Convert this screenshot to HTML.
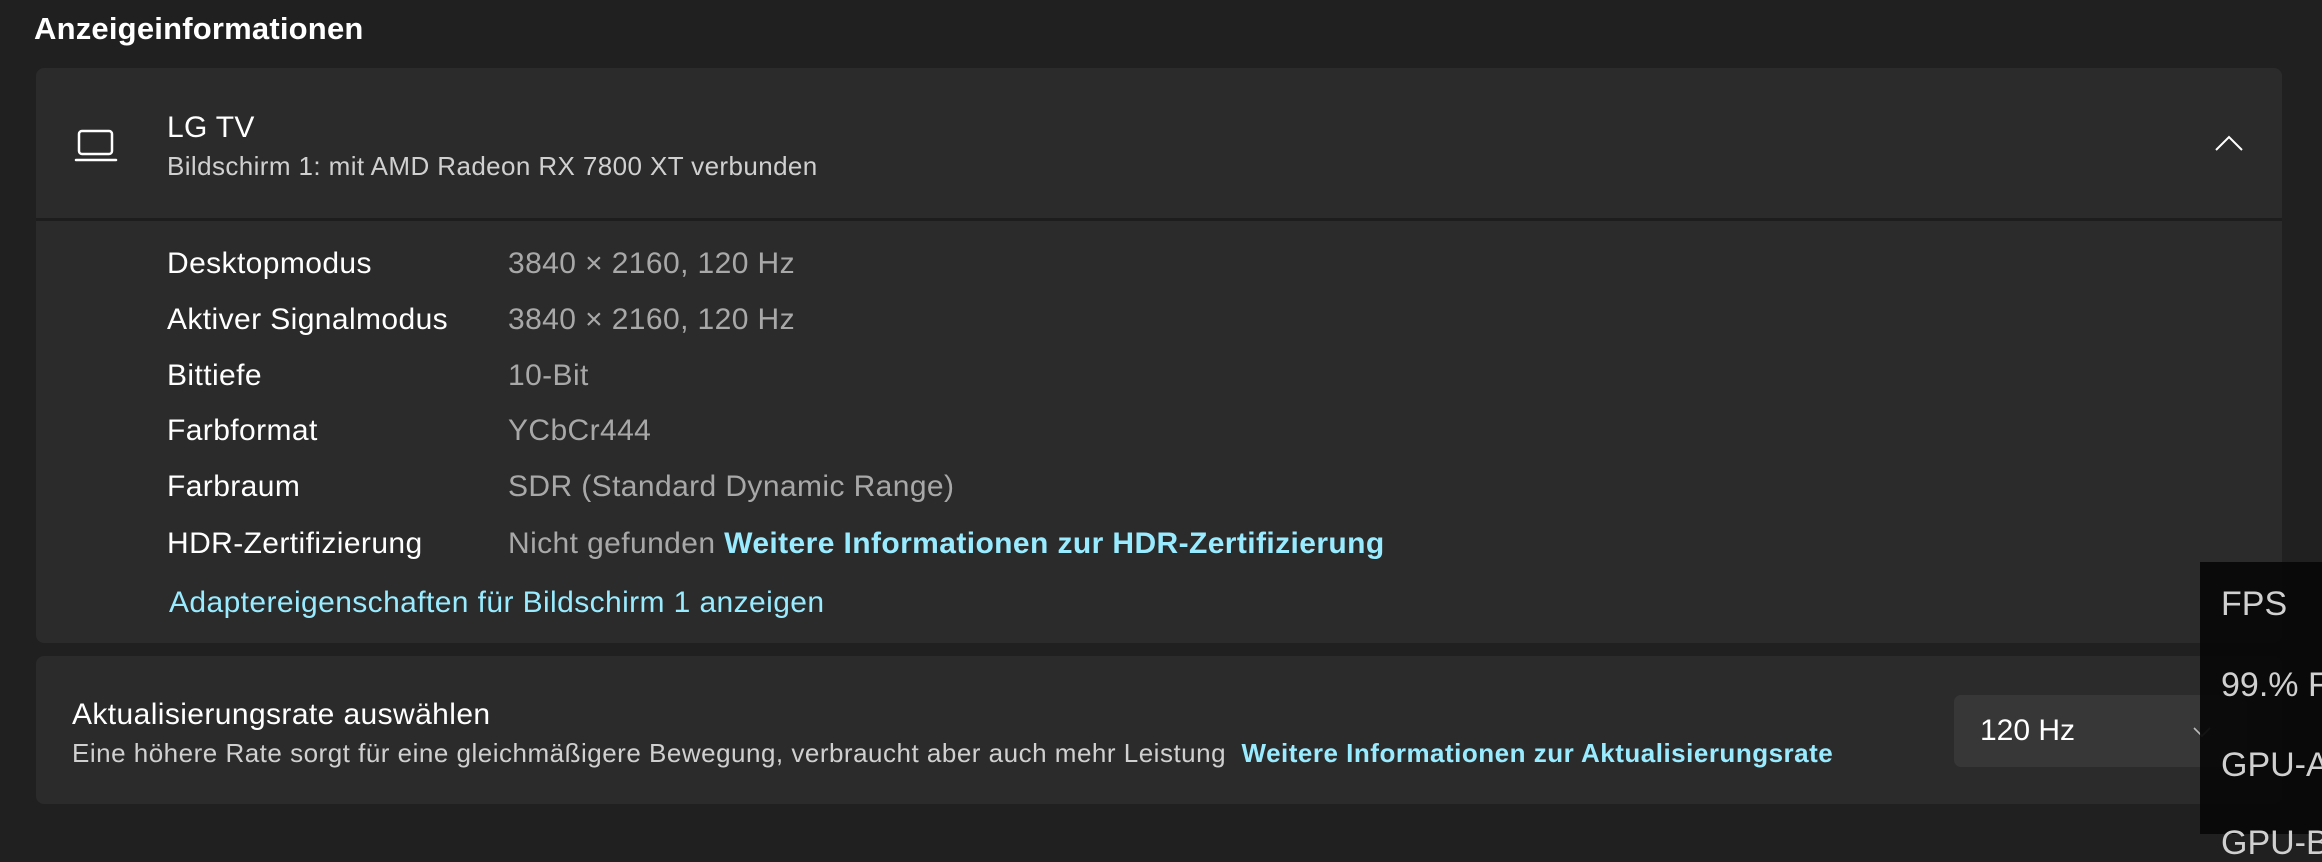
<!DOCTYPE html>
<html><head><meta charset="utf-8"><style>
*{margin:0;padding:0;box-sizing:border-box}
html,body{width:2322px;height:834px}
body{background:#202020;font-family:"Liberation Sans",sans-serif;color:#fff;position:relative;overflow:hidden}
.a{position:absolute;white-space:nowrap;line-height:1}
.card{position:absolute;background:#2b2b2b;border-radius:8px}
.lab{font-size:30px;color:#fff;left:167px;letter-spacing:0.4px}
.val{font-size:30px;color:#a8a8a8;left:508px;letter-spacing:0.4px}
.link{color:#99ebff}
.ov{font-size:34px;color:#d0d0d0;left:2221px}
</style></head><body>
<div class="a" style="left:34px;top:13px;font-size:31px;font-weight:bold;letter-spacing:0.2px">Anzeigeinformationen</div>

<div class="card" style="left:36px;top:68px;width:2246px;height:575px"></div>
<div class="a" style="left:36px;top:218px;width:2246px;height:3px;background:#1d1d1d"></div>

<svg class="a" style="left:74px;top:128px" width="44" height="36" viewBox="0 0 44 36"><rect x="5" y="3" width="33" height="23" rx="3" fill="none" stroke="#fff" stroke-width="2.5"/><line x1="2" y1="32" x2="42" y2="32" stroke="#fff" stroke-width="2.5" stroke-linecap="round"/></svg>
<div class="a" style="left:167px;top:113px;font-size:30px;letter-spacing:0.3px">LG TV</div>
<div class="a" style="left:167px;top:153px;font-size:26px;color:#d0d0d0;letter-spacing:0.4px">Bildschirm 1: mit AMD Radeon RX 7800 XT verbunden</div>
<svg class="a" style="left:2214px;top:134px" width="30" height="18" viewBox="0 0 30 18"><polyline points="2,16 15,3 28,16" fill="none" stroke="#fff" stroke-width="2"/></svg>

<div class="a lab" style="top:249px">Desktopmodus</div><div class="a val" style="top:249px">3840 × 2160, 120 Hz</div>
<div class="a lab" style="top:305px">Aktiver Signalmodus</div><div class="a val" style="top:305px">3840 × 2160, 120 Hz</div>
<div class="a lab" style="top:361px">Bittiefe</div><div class="a val" style="top:361px">10-Bit</div>
<div class="a lab" style="top:416px">Farbformat</div><div class="a val" style="top:416px">YCbCr444</div>
<div class="a lab" style="top:472px">Farbraum</div><div class="a val" style="top:472px">SDR (Standard Dynamic Range)</div>
<div class="a lab" style="top:529px">HDR-Zertifizierung</div><div class="a val" style="top:529px">Nicht gefunden <b class="link">Weitere Informationen zur HDR-Zertifizierung</b></div>
<div class="a link" style="left:169px;top:588px;font-size:30px;letter-spacing:0.4px">Adaptereigenschaften für Bildschirm 1 anzeigen</div>

<div class="card" style="left:36px;top:656px;width:2246px;height:148px"></div>
<div class="a" style="left:72px;top:700px;font-size:30px;letter-spacing:0.4px">Aktualisierungsrate auswählen</div>
<div class="a" style="left:72px;top:740px;font-size:26px;color:#d0d0d0;letter-spacing:0.5px">Eine höhere Rate sorgt für eine gleichmäßigere Bewegung, verbraucht aber auch mehr Leistung&nbsp; <b class="link">Weitere Informationen zur Aktualisierungsrate</b></div>
<div class="a" style="left:1954px;top:695px;width:293px;height:72px;background:#373737;border-radius:7px"></div>
<div class="a" style="left:1980px;top:716px;font-size:30px">120 Hz</div>
<svg class="a" style="left:2192px;top:726px" width="20" height="12" viewBox="0 0 20 12"><polyline points="2,2 10,10 18,2" fill="none" stroke="#bbb" stroke-width="1.6"/></svg>

<div class="a" style="left:2200px;top:562px;width:122px;height:272px;background:rgba(8,8,8,0.93)"></div>
<div class="a ov" style="top:587px">FPS</div>
<div class="a ov" style="top:668px">99.% F</div>
<div class="a ov" style="top:748px">GPU-A</div>
<div class="a ov" style="top:826px">GPU-B</div>
</body></html>
